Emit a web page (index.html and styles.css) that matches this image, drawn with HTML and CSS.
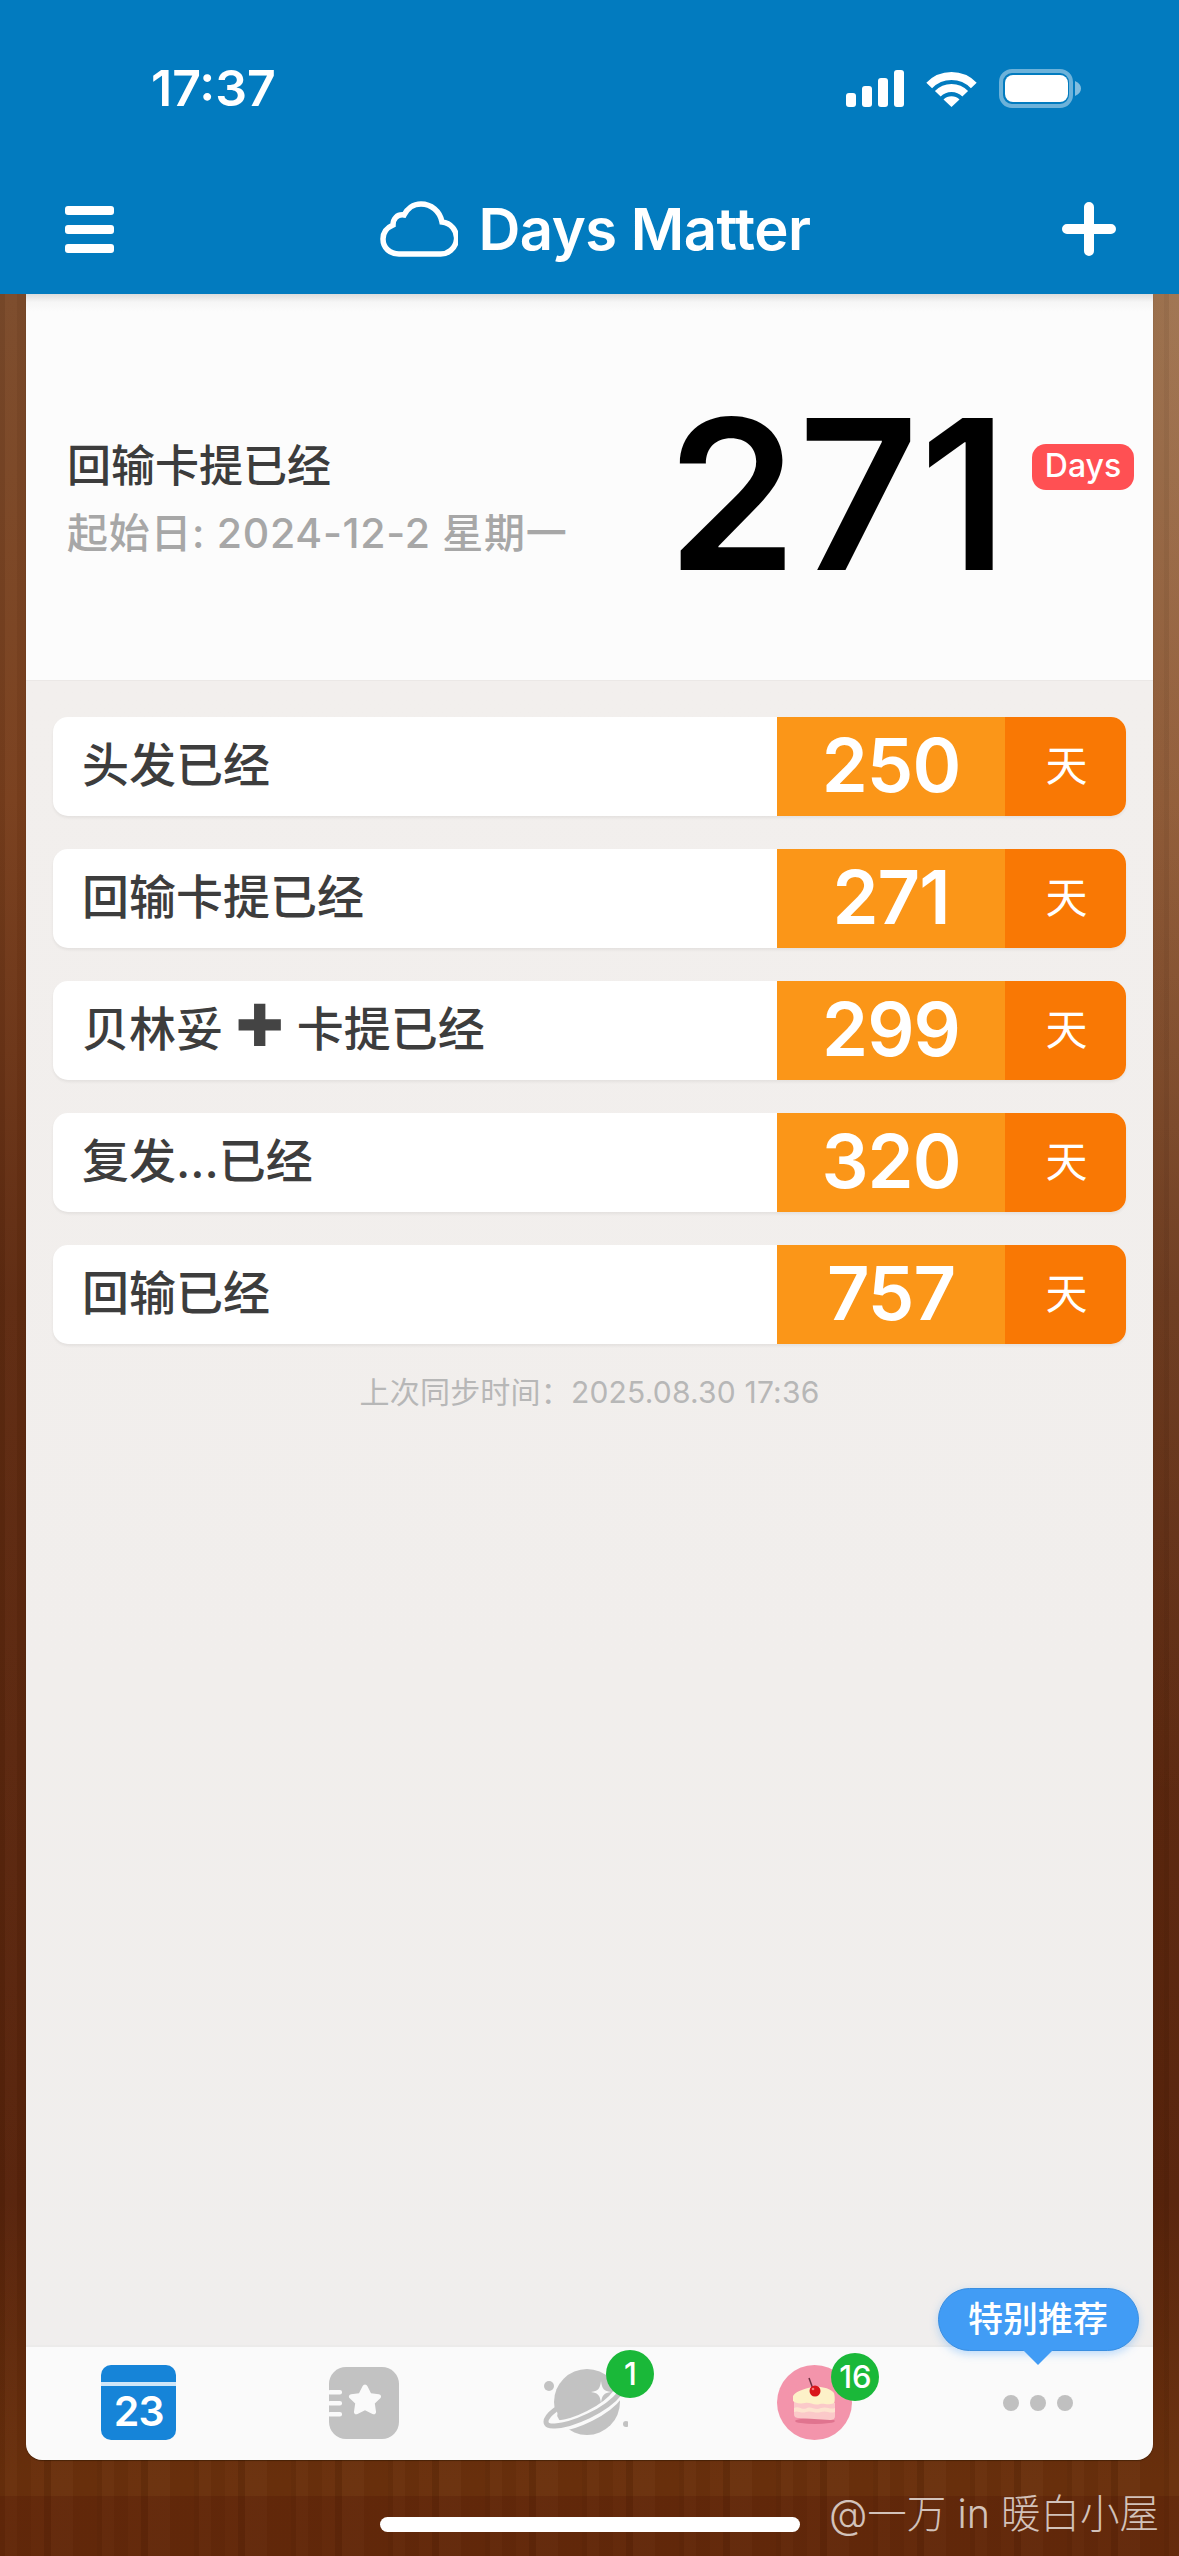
FILE: index.html
```html
<!DOCTYPE html>
<html lang="zh">
<head>
<meta charset="utf-8">
<title>Days Matter</title>
<link rel="stylesheet" href="styles.css">
</head>
<body>
<div class="screen">
  <header class="header">
    <div class="status">
      <span class="time">17:37</span>
      <div class="status-icons">
        <svg class="signal" width="58" height="37" viewBox="0 0 58 37"><rect x="0" y="23" width="10" height="14" rx="3"/><rect x="16" y="16" width="10" height="21" rx="3"/><rect x="32" y="8" width="10" height="29" rx="3"/><rect x="48" y="0" width="10" height="37" rx="3"/></svg>
        <svg class="wifi" width="51" height="37" viewBox="0 0 51 37"><path class="wifi-arc" d="M3.2 15.5A31 31 0 0 1 47.8 15.5"/><path class="wifi-arc" d="M11.8 23.8A19 19 0 0 1 39.2 23.8"/><path class="wifi-dot" d="M25.5 37L17.5 29.4A11.5 11.5 0 0 1 33.5 29.4Z"/></svg>
        <svg class="battery" width="82" height="39" viewBox="0 0 82 39"><rect class="batt-shell" x="2" y="2" width="70" height="35" rx="11"/><rect class="batt-fill" x="6" y="6" width="63" height="27" rx="8"/><path class="batt-nub" d="M76 12C80 14 82 16 82 19.500C82 23 80 25 76 27Z"/></svg>
      </div>
    </div>
    <nav class="nav">
      <div class="nav-left"><div class="burger"><i></i><i></i><i></i></div></div>
      <div class="brand">
        <svg class="cloud" width="78" height="56" viewBox="0 0 78 56"><path d="M19 53H59A16 16 0 0 0 62 21C60 10 51 3 41 3C33 3 27 8 24 14C17 13 13 18 13 24C6 27 3 32 3 38C3 47 10 53 19 53Z"/></svg>
        <span class="brand-name">Days Matter</span>
      </div>
      <div class="nav-right"><svg class="plus" width="54" height="54" viewBox="0 0 54 54"><path d="M27 5V49M5 27H49"/></svg></div>
    </nav>
  </header>

  <main class="card">
    <section class="hero">
      <div class="hero-text">
        <div class="hero-title">回输卡提已经</div>
        <div class="hero-sub">起始日: 2024-12-2 星期一</div>
      </div>
      <div class="hero-num">271</div>
      <div class="hero-badge">Days</div>
    </section>

    <section class="list">
      <div class="row"><div class="row-title">头发已经</div><div class="row-num">250</div><div class="row-unit">天</div></div>
      <div class="row"><div class="row-title">回输卡提已经</div><div class="row-num">271</div><div class="row-unit">天</div></div>
      <div class="row"><div class="row-title">贝林妥 <span class="cross">✚</span> 卡提已经</div><div class="row-num">299</div><div class="row-unit">天</div></div>
      <div class="row"><div class="row-title">复发...已经</div><div class="row-num">320</div><div class="row-unit">天</div></div>
      <div class="row"><div class="row-title">回输已经</div><div class="row-num">757</div><div class="row-unit">天</div></div>
      <p class="sync">上次同步时间：2025.08.30 17:36</p>
    </section>

    <footer class="tabs">
      <div class="tab">
        <div class="cal"><div class="cal-top"></div><div class="cal-day">23</div></div>
      </div>
      <div class="tab">
        <svg width="70" height="72" viewBox="0 0 70 72"><rect class="tab-grey" width="70" height="72" rx="17"/><path class="tab-white" d="M36 17.500C37 17.500 38 18.200 38.600 19.500L42 26.200L49.800 27.300C52 27.700 52.800 29.800 51.300 31.300L45.800 36.600L47 44.500C47.400 46.700 45.300 48 43.500 47L36 43.300L28.500 47C26.700 48 24.600 46.700 25 44.500L26.200 36.600L20.700 31.300C19.200 29.800 20 27.700 22.200 27.300L30 26.200L33.400 19.500C34 18.200 35 17.500 36 17.500Z"/><rect class="tab-white" x="-1" y="23" width="14" height="4.500" rx="2"/><rect class="tab-white" x="-1" y="34" width="14" height="4.500" rx="2"/><rect class="tab-white" x="-1" y="45" width="14" height="4.500" rx="2"/></svg>
      </div>
      <div class="tab">
        <div class="tab-icon tab-icon-planet">
          <svg width="88" height="72" viewBox="0 0 88 72"><circle class="tab-grey" cx="47" cy="35" r="33"/><circle class="tab-grey" cx="9" cy="19" r="5"/><circle class="tab-grey" cx="86" cy="57" r="3"/><path class="ring-gap" d="M12 47C6 54 8 60 18 59C34 58 66 44 78 27"/><path class="ring" d="M15 43C3 52 3 60 15 59C32 58 66 44 80 26"/><path class="tab-white" d="M61 14C62 22 64 24 71 25C64 26 62 28 61 36C60 28 58 26 51 25C58 24 60 22 61 14Z"/></svg>
          <span class="count count-planet">1</span>
        </div>
      </div>
      <div class="tab">
        <div class="tab-icon">
          <svg width="75" height="75" viewBox="0 0 75 75"><circle class="cake-bg" cx="37.500" cy="37.500" r="37.500"/><ellipse class="cake-shadow" cx="38" cy="56" rx="20" ry="3"/><path class="cake-body" d="M17 36L58 38V51C58 54 56 55 53 55L22 53C19 53 17 52 17 49Z"/><path class="cake-layer" d="M17 43C22 40 25 46 30 43C35 41 38 46 44 43C50 41 53 45 58 43V47C52 49 50 45 44 47C38 49 34 45 29 47C24 49 21 45 17 47Z"/><path class="cake-top" d="M16 31C19 26 27 24 35 22C44 21 53 23 57 28C58 31 58 37 57 38C50 41 48 38 43 39C37 41 33 37 28 38C23 39 18 38 16 36Z"/><path class="cake-stem" d="M32 13L36 24"/><circle class="cherry" cx="38" cy="26" r="5.500"/><circle class="cherry-shine" cx="36" cy="24" r="1.300"/></svg>
          <span class="count count-cake">16</span>
        </div>
      </div>
      <div class="tab">
        <div class="dots"><i></i><i></i><i></i></div>
        <div class="bubble">特别推荐</div>
      </div>
    </footer>
  </main>

  <div class="home-bar"></div>
  <div class="watermark">@一万 in 暖白小屋</div>
</div>
</body>
</html>
```

FILE: styles.css
```css
* { box-sizing: border-box; }
html, body { margin: 0; padding: 0; }
body {
  width: 1179px;
  height: 2556px;
  overflow: hidden;
  font-family: Inter, "Noto Sans CJK SC", sans-serif;
}
.screen {
  position: relative;
  width: 1179px;
  height: 2556px;
  display: flex;
  flex-direction: column;
  background:
    linear-gradient(180deg, rgba(0,0,0,0) 2496px, rgba(70,10,0,.2) 2496px),
    repeating-linear-gradient(90deg, rgba(0,0,0,.06) 0 5px, rgba(255,255,255,.015) 5px 17px, rgba(0,0,0,.03) 17px 31px, rgba(255,255,255,.01) 31px 44px, rgba(0,0,0,.08) 44px 51px, rgba(255,255,255,.02) 51px 73px, rgba(0,0,0,.02) 73px 97px),
    radial-gradient(ellipse 420px 1500px at 100% 300px, rgba(255,225,180,.28), rgba(255,225,180,0)),
    linear-gradient(180deg, #7c4b2b 0, #7c4b2b 300px, #793f1d 800px, #5f2b11 1300px, #57230b 2200px, #6a300c 2480px, #6a300c 100%);
}

/* header */
.header {
  height: 294px;
  flex: none;
  background: #027bbf;
  color: #fff;
  padding-top: 60px;
  position: relative;
  z-index: 1;
}
.status {
  height: 56px;
  display: flex;
  align-items: center;
  justify-content: space-between;
  padding: 0 98px 0 151px;
}
.time { font-size: 50px; font-weight: 600; letter-spacing: 0; line-height: 56px; }
.status-icons { display: flex; align-items: center; gap: 22px; }
.signal { fill: #fff; }
.wifi-arc { fill: none; stroke: #fff; stroke-width: 8; }
.wifi-dot { fill: #fff; }
.batt-shell { fill: none; stroke: rgba(255,255,255,.42); stroke-width: 4; }
.batt-fill { fill: #fff; }
.batt-nub { fill: rgba(255,255,255,.5); }

.nav {
  margin-top: 83px;
  display: grid;
  grid-template-columns: 1fr auto 1fr;
  align-items: center;
  padding: 0 63px 0 65px;
  height: 60px;
}
.burger { width: 49px; display: flex; flex-direction: column; gap: 10px; }
.burger i { display: block; height: 9px; border-radius: 3px; background: #fff; }
.brand { display: flex; align-items: center; gap: 20px; padding-left: 10px; }
.cloud { fill: none; stroke: #fff; stroke-width: 5.500; }
.brand-name { font-size: 58px; font-weight: 600; letter-spacing: -.5px; line-height: 60px; }
.nav-right { display: flex; justify-content: flex-end; }
.plus { fill: none; stroke: #fff; stroke-width: 10; stroke-linecap: round; }

/* card */
.card {
  margin: 0 26px;
  height: 2166px;
  flex: none;
  display: flex;
  flex-direction: column;
  border-radius: 0 0 16px 16px;
  overflow: hidden;
  box-shadow: 0 1px 1px rgba(40,20,0,.5);
}
.hero {
  height: 387px;
  flex: none;
  background: linear-gradient(180deg, #dcdcdc 0, #f6f6f6 8px, #fcfcfc 18px);
  border-bottom: 1px solid #ebe8e6;
  display: flex;
  align-items: center;
  padding: 22px 19px 0 41px;
}
.hero-text { flex: 1; display: flex; flex-direction: column; gap: 10px; }
.hero-title { font-size: 44px; font-weight: 500; line-height: 60px; color: #3c3c3c; }
.hero-sub { font-size: 41px; font-weight: 500; line-height: 54px; letter-spacing: .7px; color: #a7a7a7; white-space: nowrap; }
.hero-num {
  font-size: 209px;
  font-weight: 600;
  line-height: 200px;
  letter-spacing: 1px;
  color: #000;
  margin-top: -8px;
  margin-right: 23px;
}
.hero-badge {
  align-self: flex-start;
  margin-top: 128px;
  width: 102px;
  height: 46px;
  border-radius: 14px;
  background: #ff5053;
  color: #fff;
  font-size: 32px;
  font-weight: 500;
  line-height: 44px;
  text-align: center;
}

.list {
  flex: 1;
  background: linear-gradient(180deg, #f2efed 0, #f1eeec 60%, #f0eeed 100%);
  padding: 36px 27px 0 27px;
  display: flex;
  flex-direction: column;
  gap: 33px;
}
.row {
  height: 99px;
  flex: none;
  display: flex;
  border-radius: 15px;
  overflow: hidden;
  box-shadow: 0 2px 3px rgba(0,0,0,.06);
  background: #fff;
}
.row-title {
  flex: 1;
  padding-left: 29px;
  font-size: 47px;
  font-weight: 500;
  line-height: 95px;
  color: #3d3d3d;
  white-space: nowrap;
}
.cross { font-family: "DejaVu Sans", sans-serif; font-size: 58px; line-height: 40px; color: #444; }
.row-num {
  width: 228px;
  background: #fb9618;
  color: #fff;
  font-size: 74px;
  font-weight: 600;
  letter-spacing: -1px;
  line-height: 97px;
  text-align: center;
}
.row-unit {
  width: 121px;
  padding-left: 2px;
  background: #f97804;
  color: #fff;
  font-size: 42px;
  line-height: 97px;
  text-align: center;
}
.sync {
  margin: -7px 0 0;
  text-align: center;
  font-size: 30px;
  line-height: 44px;
  letter-spacing: .2px;
  color: #b7b7b7;
}

/* tab bar */
.tabs {
  position: relative;
  height: 115px;
  flex: none;
  background: #fafafa;
  border-top: 2px solid #ecebea;
  display: grid;
  grid-template-columns: repeat(5, 1fr);
}
.tab { position: relative; display: flex; align-items: center; justify-content: center; padding-bottom: 2px; }
.tab-icon { position: relative; display: flex; }
.tab-icon-planet { margin-left: -10px; }
.tab-grey { fill: #c2c2c2; }
.tab-white { fill: #fafafa; }
.cal {
  width: 75px;
  height: 75px;
  border-radius: 10px;
  background: #1684d8;
  overflow: hidden;
  color: #fff;
}
.cal-top { height: 21px; border-bottom: 4px solid #cfe6f8; }
.cal-day { font-size: 41px; font-weight: 600; letter-spacing: -1px; line-height: 50px; text-align: center; }
.ring { fill: none; stroke: #c2c2c2; stroke-width: 5; stroke-linecap: round; }
.ring-gap { fill: none; stroke: #fafafa; stroke-width: 11; stroke-linecap: round; }
.count {
  position: absolute;
  width: 48px;
  height: 48px;
  border-radius: 50%;
  background: #1ab839;
  color: #fff;
  font-size: 31px;
  font-weight: 500;
  line-height: 47px;
  text-align: center;
}
.count-planet { top: -17px; right: -26px; }
.count-cake { top: -12px; right: -27px; }
.cake-bg { fill: #f394ab; }
.cake-shadow { fill: #e0748f; }
.cake-body { fill: #fbc9c9; }
.cake-layer { fill: #fde3cf; }
.cake-top { fill: #fdf1c8; }
.cake-stem { stroke: #6b3040; stroke-width: 1.500; fill: none; }
.cherry { fill: #d9151b; }
.cherry-shine { fill: #f57a7a; }
.dots { display: flex; gap: 11px; margin-left: -4px; }
.dots i { display: block; width: 16px; height: 16px; border-radius: 50%; background: #c0c0c0; }
.bubble {
  position: absolute;
  left: 10px;
  top: -59px;
  width: 201px;
  height: 63px;
  border-radius: 32px;
  background: #419cf5;
  border: 1px solid #3a8ee0;
  box-shadow: 0 3px 8px rgba(65,156,245,.35);
  color: #fff;
  font-size: 35px;
  font-weight: 500;
  line-height: 60px;
  text-align: center;
}
.bubble::after {
  content: "";
  position: absolute;
  left: 50%;
  bottom: -15px;
  margin-left: -15px;
  border-style: solid;
  border-width: 15px 15px 0;
  border-color: #419cf5 transparent transparent;
}

.home-bar {
  position: absolute;
  left: 380px;
  top: 2517px;
  width: 420px;
  height: 15px;
  border-radius: 8px;
  background: #fff;
}
.watermark {
  position: absolute;
  right: 20px;
  top: 2487px;
  font-size: 39.5px;
  font-weight: 300;
  line-height: 54px;
  color: rgba(255,255,255,.72);
  white-space: nowrap;
}
```
